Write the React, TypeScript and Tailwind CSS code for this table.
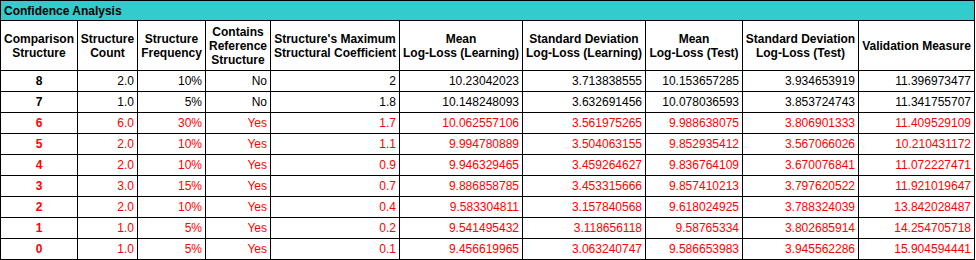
import React from "react";

const headers: React.ReactNode[] = [
  <>Comparison<br />Structure</>,
  <>Structure<br />Count</>,
  <>Structure<br />Frequency</>,
  <>Contains<br />Reference<br />Structure</>,
  <>Structure's Maximum<br />Structural Coefficient</>,
  <>Mean<br />Log-Loss (Learning)</>,
  <>Standard Deviation<br />Log-Loss (Learning)</>,
  <>Mean<br />Log-Loss (Test)</>,
  <>Standard Deviation<br />Log-Loss (Test)</>,
  <>Validation Measure</>,
];

const rows: { red: boolean; v: string[] }[] = [
  { red: false, v: ["8", "2.0", "10%", "No", "2", "10.23042023", "3.713838555", "10.153657285", "3.934653919", "11.396973477"] },
  { red: false, v: ["7", "1.0", "5%", "No", "1.8", "10.148248093", "3.632691456", "10.078036593", "3.853724743", "11.341755707"] },
  { red: true, v: ["6", "6.0", "30%", "Yes", "1.7", "10.062557106", "3.561975265", "9.988638075", "3.806901333", "11.409529109"] },
  { red: true, v: ["5", "2.0", "10%", "Yes", "1.1", "9.994780889", "3.504063155", "9.852935412", "3.567066026", "10.210431172"] },
  { red: true, v: ["4", "2.0", "10%", "Yes", "0.9", "9.946329465", "3.459264627", "9.836764109", "3.670076841", "11.072227471"] },
  { red: true, v: ["3", "3.0", "15%", "Yes", "0.7", "9.886858785", "3.453315666", "9.857410213", "3.797620522", "11.921019647"] },
  { red: true, v: ["2", "2.0", "10%", "Yes", "0.4", "9.583304811", "3.157840568", "9.618024925", "3.788324039", "13.842028487"] },
  { red: true, v: ["1", "1.0", "5%", "Yes", "0.2", "9.541495432", "3.118656118", "9.58765334", "3.802685914", "14.254705718"] },
  { red: true, v: ["0", "1.0", "5%", "Yes", "0.1", "9.456619965", "3.063240747", "9.586653983", "3.945562286", "15.904594441"] },
];

export default function App() {
  return (
    <div className="bg-white w-[976px] h-[260px] font-['Liberation_Sans',Arial,sans-serif] text-[12px]">
      <div className="w-[975px] border border-black">
        <div className="h-[20px] bg-[#33cccc] border-b border-black flex items-center pl-[3px] font-bold text-black leading-[14px]">
          Confidence Analysis
        </div>
        <div className="grid grid-cols-[76px_59px_67px_64px_128px_122px_122px_96px_115px_115px] gap-px bg-black">
          {headers.map((h, i) => (
            <div
              key={i}
              className="h-[49px] bg-white flex items-center justify-center text-center font-bold leading-[14px] text-black"
            >
              <div>{h}</div>
            </div>
          ))}
          {rows.map((r, ri) =>
            r.v.map((c, ci) => (
              <div
                key={ri + "-" + ci}
                className={
                  "h-[20px] bg-white flex items-center leading-[14px] " +
                  (r.red ? "text-[#ff0000] " : "text-black ") +
                  (ci === 0 ? "justify-center font-bold" : "justify-end pr-[3px]")
                }
              >
                {c}
              </div>
            ))
          )}
        </div>
      </div>
    </div>
  );
}
